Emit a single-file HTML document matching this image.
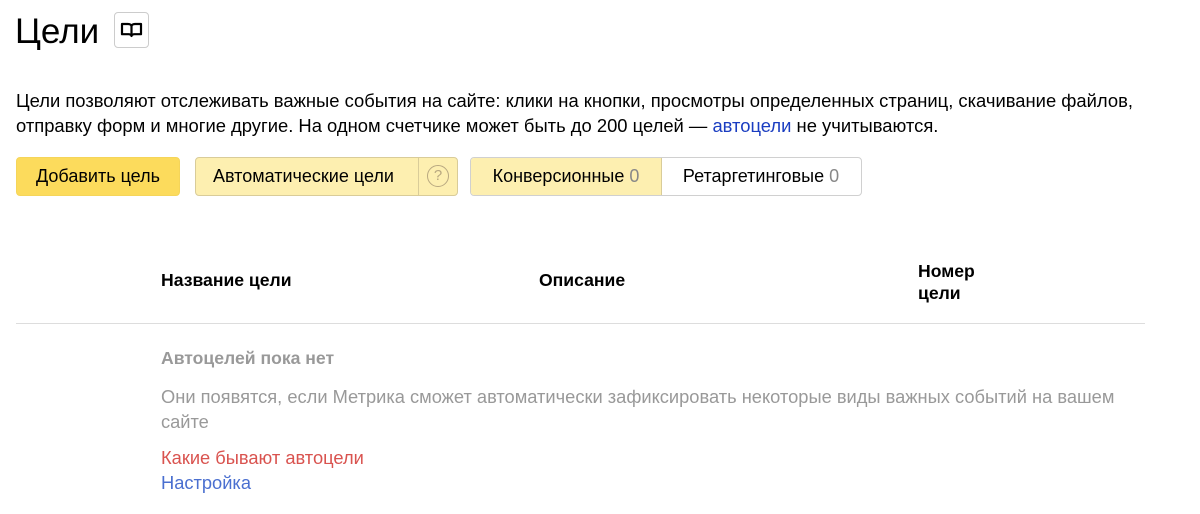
<!DOCTYPE html>
<html><head><meta charset="utf-8"><style>
body{margin:0;width:1200px;height:514px;background:#fff;font-family:"Liberation Sans",Arial,sans-serif;color:#000;position:relative;overflow:hidden}
.a{position:absolute;white-space:nowrap}
h1{position:absolute;left:15px;top:9px;margin:0;font-weight:normal;font-size:35px;line-height:46px}
.book{position:absolute;left:114px;top:12px;width:35px;height:36px;border:1px solid #ccc;border-radius:4px;box-sizing:border-box}
p{position:absolute;left:16px;top:88px;margin:0;font-size:18.4px;line-height:25px;width:1150px}
.btn{position:absolute;top:157px;height:39px;box-sizing:border-box;border-radius:4px;font-size:18px;line-height:37px;text-align:center}
.th{position:absolute;font-weight:bold;font-size:17.6px;line-height:22px}
</style></head><body>
<h1>Цели</h1>
<div class="book"><svg width="33" height="34" viewBox="0 0 33 34"><path d="M7 11h6c2 0 3.5 1 3.5 2.5V23c0-1-1.5-1.8-3-1.8H7z M26 11h-6c-2 0-3.5 1-3.5 2.5V23c0-1 1.5-1.8 3-1.8H26z" fill="none" stroke="#000" stroke-width="2.2" stroke-linejoin="round"/></svg></div>
<p>Цели позволяют отслеживать важные события на сайте: клики на кнопки, просмотры определенных страниц, скачивание файлов, отправку форм и многие другие. На одном счетчике может быть до 200 целей — <span style="color:#1a3dc1">автоцели</span> не учитываются.</p>
<div class="btn" style="left:16px;width:164px;background:#fcdb5c;border:1px solid #f5d55a">Добавить цель</div>
<div class="btn" style="left:195px;width:263px;background:#fdefb0;border:1px solid #d9cc99;text-align:left">
<span style="position:absolute;left:17px">Автоматические цели</span>
<span style="position:absolute;left:222px;top:0;bottom:0;border-left:1px solid #d9cc99"></span>
<span style="position:absolute;left:231px;top:7px;width:22px;height:22px;border:1.5px solid #b8a880;border-radius:50%;box-sizing:border-box;color:#b8a880;font-size:15px;line-height:20px;text-align:center">?</span></div>
<div class="btn" style="left:470px;width:392px;border:1px solid #d0d0d0;background:#fff;overflow:hidden">
<span style="position:absolute;left:0;top:0;width:190px;height:100%;background:#fdefb0;border-right:1px solid #d9cc99">Конверсионные <span style="color:#888">0</span></span>
<span style="position:absolute;left:190px;width:200px">Ретаргетинговые <span style="color:#888">0</span></span></div>
<div class="th" style="left:161px;top:269px">Название цели</div>
<div class="th" style="left:539px;top:269px">Описание</div>
<div class="th" style="left:918px;top:260px">Номер<br>цели</div>
<div class="a" style="left:16px;top:323px;width:1129px;height:1px;background:#ddd"></div>
<div class="a" style="left:161px;top:348px;font-size:17.6px;font-weight:bold;color:#999">Автоцелей пока нет</div>
<div class="a" style="left:161px;top:384px;font-size:18.3px;line-height:25px;color:#999;white-space:normal;width:990px">Они появятся, если Метрика сможет автоматически зафиксировать некоторые виды важных событий на вашем<br>сайте</div>
<div class="a" style="left:161px;top:447px;font-size:18.3px;color:#d9534f">Какие бывают автоцели</div>
<div class="a" style="left:161px;top:472px;font-size:18.3px;color:#4a6fd0">Настройка</div>
</body></html>
